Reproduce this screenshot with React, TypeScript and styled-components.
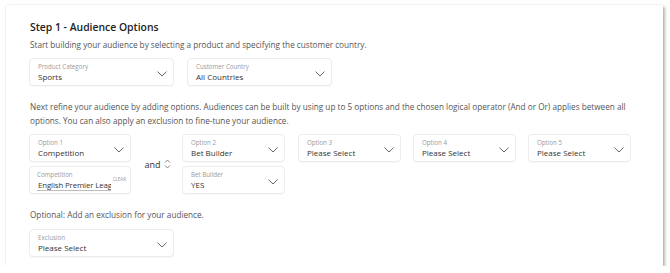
import { createGlobalStyle, styled } from "styled-components"

const GlobalStyle = createGlobalStyle`
  body {
    margin: 0;
    background: #fff;
    font-family: "Open Sans", "Noto Sans", sans-serif;
    color: #333;
  }
`

const Page = styled.div`
  padding: 5px 7px 0 6px;
`

const Card = styled.section`
  background: #fff;
  padding: 15px 24px 9px 23px;
  box-shadow:
    0 0 2px rgba(0, 0, 0, 0.12),
    2px 2px 3px rgba(0, 0, 0, 0.28);
`

const Title = styled.h2`
  margin: 0 0 0 1px;
  font-size: 10.4px;
  line-height: 15px;
  font-weight: 600;
  color: #222;
`

const Text = styled.p<{ $top?: number }>`
  margin: ${(p) => p.$top ?? 0}px 0 0 1px;
  font-size: 8.2px;
  line-height: 14px;
  color: #555;
`

const SelectRow = styled.div<{ $top: number }>`
  display: flex;
  gap: 13px;
  margin-top: ${(p) => p.$top}px;
`

const Box = styled.div<{ $width: number }>`
  box-sizing: border-box;
  flex: none;
  width: ${(p) => p.$width}px;
  height: 28px;
  padding: 4px 6px 0 8px;
  border: 1px solid #ececec;
  border-radius: 4px;
  background: #fff;
  box-shadow: 0 1px 1px rgba(0, 0, 0, 0.03);
  display: flex;
  align-items: center;
  gap: 4px;
`

const InputBox = styled(Box)`
  padding-right: 4px;
  padding-left: 7px;
  gap: 2px;
`

const BoxText = styled.div`
  flex: 1;
  min-width: 0;
  align-self: flex-start;
`

const Label = styled.div`
  font-size: 6.2px;
  line-height: 8px;
  color: #9a9a9a;
`

const Value = styled.div`
  font-size: 8px;
  line-height: 12px;
  color: #333;
  white-space: nowrap;
`

const TextInput = styled.input`
  display: block;
  box-sizing: border-box;
  width: 100%;
  height: 12px;
  margin: 0;
  padding: 0 0 0 1px;
  border: none;
  border-bottom: 1px solid #bdbdbd;
  outline: none;
  background: transparent;
  font-family: inherit;
  font-size: 7.8px;
  letter-spacing: -0.1px;
  color: #333;
`

const Clear = styled.span`
  align-self: flex-start;
  margin-top: 5px;
  font-size: 4.5px;
  color: #999;
`

const OptionsRow = styled.div`
  display: flex;
  align-items: flex-start;
  margin-top: 6px;
`

const Column = styled.div`
  display: flex;
  flex-direction: column;
  gap: 4px;
`

const Connector = styled.div`
  flex: none;
  align-self: center;
  width: 51px;
  display: flex;
  align-items: center;
  justify-content: center;
  gap: 3px;
  font-size: 9px;
  color: #333;
  padding-left: 2px;
  box-sizing: border-box;
`

const Others = styled.div`
  display: flex;
  gap: 12px;
  margin-left: 13px;
`

const Chevron = () => (
  <svg width="10" height="6" viewBox="0 0 10 6" fill="none">
    <path d="M0.5 0.6 L5 5 L9.5 0.6" stroke="#555" strokeWidth="0.9" />
  </svg>
)

const UpDown = () => (
  <svg width="7" height="10" viewBox="0 0 7 10" fill="none">
    <path
      d="M1 3.6 L3.5 1 L6 3.6 M1 6.4 L3.5 9 L6 6.4"
      stroke="#666"
      strokeWidth="0.8"
    />
  </svg>
)

const Select = ({
  label,
  value,
  width,
}: {
  label: string
  value: string
  width: number
}) => (
  <Box $width={width}>
    <BoxText>
      <Label>{label}</Label>
      <Value>{value}</Value>
    </BoxText>
    <Chevron />
  </Box>
)

export default function App() {
  return (
    <>
      <GlobalStyle />
      <Page>
        <Card>
          <Title>Step 1 - Audience Options</Title>
          <Text $top={3}>
            Start building your audience by selecting a product and specifying
            the customer country.
          </Text>
          <SelectRow $top={6}>
            <Select label="Product Category" value="Sports" width={145} />
            <Select label="Customer Country" value="All Countries" width={145} />
          </SelectRow>

          <Text $top={14}>
            Next refine your audience by adding options. Audiences can be built
            by using up to 5 options and the chosen logical operator (And or Or)
            applies between all options. You can also apply an exclusion to
            fine-tune your audience.
          </Text>

          <OptionsRow>
            <Column>
              <Select label="Option 1" value="Competition" width={102} />
              <InputBox $width={102}>
                <BoxText>
                  <Label>Competition</Label>
                  <TextInput readOnly value="English Premier League" />
                </BoxText>
                <Clear>CLEAR</Clear>
              </InputBox>
            </Column>
            <Connector>
              and <UpDown />
            </Connector>
            <Column>
              <Select label="Option 2" value="Bet Builder" width={103} />
              <Select label="Bet Builder" value="YES" width={103} />
            </Column>
            <Others>
              <Select label="Option 3" value="Please Select" width={103} />
              <Select label="Option 4" value="Please Select" width={103} />
              <Select label="Option 5" value="Please Select" width={103} />
            </Others>
          </OptionsRow>

          <Text $top={14}>Optional: Add an exclusion for your audience.</Text>
          <SelectRow $top={7}>
            <Select label="Exclusion" value="Please Select" width={145} />
          </SelectRow>
        </Card>
      </Page>
    </>
  )
}
